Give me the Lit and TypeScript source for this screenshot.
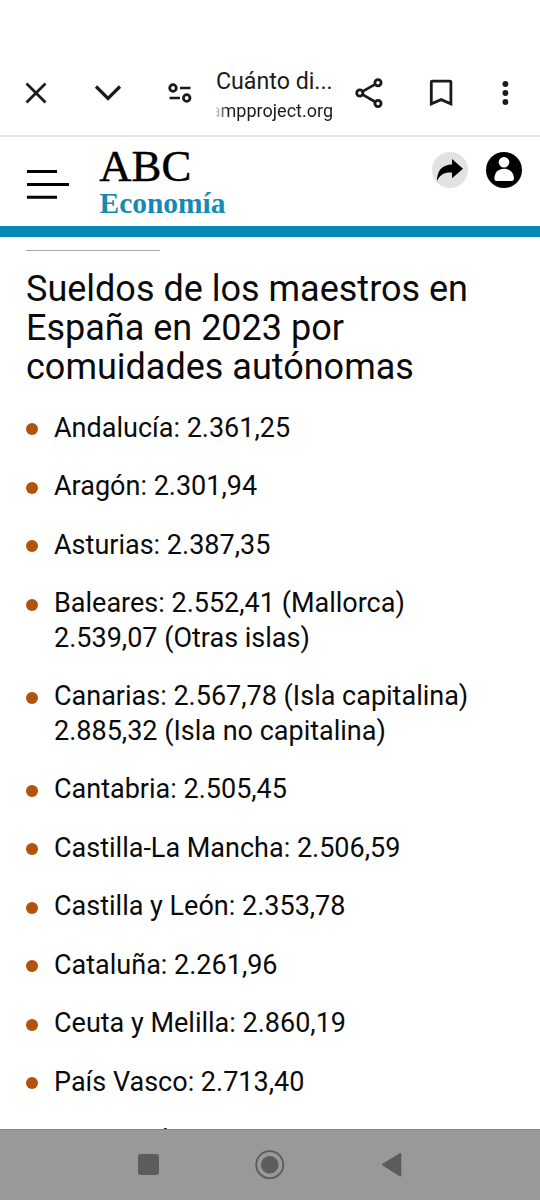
import { LitElement, html, css } from "lit";
import { customElement } from "lit/decorators.js";

const SALARIES: string[][] = [
  ["Andalucía: 2.361,25"],
  ["Aragón: 2.301,94"],
  ["Asturias: 2.387,35"],
  ["Baleares: 2.552,41 (Mallorca)", "2.539,07 (Otras islas)"],
  ["Canarias: 2.567,78 (Isla capitalina)", "2.885,32 (Isla no capitalina)"],
  ["Cantabria: 2.505,45"],
  ["Castilla-La Mancha: 2.506,59"],
  ["Castilla y León: 2.353,78"],
  ["Cataluña: 2.261,96"],
  ["Ceuta y Melilla: 2.860,19"],
  ["País Vasco: 2.713,40"],
  ["Extremadura"],
];

@customElement("browser-bar")
class BrowserBar extends LitElement {
  static styles = css`
    :host { display: block; flex: none; }
    .bar {
      box-sizing: border-box; height: 137px; padding-top: 57px;
      border-bottom: 2px solid #e3e3e3; display: grid;
      grid-template-columns: 72px 72px 72px 117px 72px 72px 57px 6px;
      color: #1b1b1b;
    }
    .icon { width: 72px; height: 72px; display: block; fill: none; stroke: currentColor; stroke-width: 2.8; }
    .page { padding-top: 9px; font-family: Roboto, sans-serif; white-space: nowrap; }
    .title { font-size: 23.2px; line-height: 30px; }
    .host {
      font-size: 18px; line-height: 24px; margin-top: 3px;
      display: flex; justify-content: flex-end; overflow: hidden;
      -webkit-mask-image: linear-gradient(to right, rgba(0,0,0,.15), #000 11px);
      mask-image: linear-gradient(to right, rgba(0,0,0,.15), #000 11px);
    }
  `;
  render() {
    return html`
      <div class="bar">
        <svg class="icon" viewBox="0 0 72 72"><path d="M26.5 26.5 45.5 45.5M45.5 26.5 26.5 45.5" /></svg>
        <svg class="icon" viewBox="0 0 72 72"><path stroke-width="3.2" d="M24 29.5 36 41.5 48 29.5" /></svg>
        <svg class="icon" viewBox="0 0 72 72">
          <circle cx="29" cy="31" r="3.3" /><circle cx="42.7" cy="41" r="3.3" />
          <path stroke-width="2.3" d="M36 31H46.5M25.5 41H36" />
        </svg>
        <div class="page">
          <div class="title">Cuánto di...</div>
          <div class="host">ampproject.org</div>
        </div>
        <svg class="icon" viewBox="0 0 72 72">
          <circle cx="26.8" cy="36" r="3.1" /><circle cx="45" cy="25.7" r="3.1" /><circle cx="45" cy="46.5" r="3.1" />
          <path d="M29.7 34.4 42 27.4M29.7 37.6 42 44.8" />
        </svg>
        <svg class="icon" viewBox="0 0 72 72"><path d="M26.3 46.8V25.2Q26.3 24.2 27.3 24.2H44.9Q45.9 24.2 45.9 25.2V46.8L36.1 42.6Z" /></svg>
        <svg class="icon" viewBox="0 0 72 72">
          <g fill="currentColor" stroke="none"><circle cx="28.4" cy="27" r="2.9" /><circle cx="28.4" cy="36" r="2.9" /><circle cx="28.4" cy="45" r="2.9" /></g>
        </svg>
      </div>
    `;
  }
}

@customElement("site-header")
class SiteHeader extends LitElement {
  static styles = css`
    :host { display: block; flex: none; }
    .header {
      box-sizing: border-box; height: 100px; border-bottom: 11px solid #058ab4;
      display: grid; grid-template-columns: 99px 1fr auto; padding-right: 18px;
    }
    .menu { width: 42px; height: 32px; margin: 32px 0 0 27px; display: block; }
    .logo { width: 140px; height: 89px; display: block; }
    .actions { display: flex; gap: 18px; padding-top: 14.5px; }
    .round { width: 36px; height: 36px; display: block; }
  `;
  render() {
    return html`
      <div class="header">
        <svg class="menu" viewBox="0 0 42 32"><path stroke="#000" stroke-width="3" d="M0 2.5H30M0 15.5H42M0 28.2H30" /></svg>
        <svg class="logo" viewBox="0 0 140 89">
          <text x="0.3" y="44" textLength="92" lengthAdjust="spacingAndGlyphs" font-family="Liberation Serif, serif" font-size="43.8" fill="#000" stroke="#000" stroke-width=".5">ABC</text>
          <text x="0.5" y="76" textLength="126" lengthAdjust="spacingAndGlyphs" font-family="Liberation Serif, serif" font-weight="700" font-size="28.8" fill="#168ab2">Economía</text>
        </svg>
        <div class="actions">
          <svg class="round" viewBox="0 0 36 36">
            <circle cx="18" cy="18" r="18" fill="#e2e2e2" />
            <path d="M5 29C5 18 10.5 12.6 20 12.4V7L31 16.7 20 26.3V20.5C12 20.2 8.2 22.5 5 29Z" />
          </svg>
          <svg class="round" viewBox="0 0 36 36">
            <circle cx="18" cy="18" r="18" />
            <circle cx="18" cy="10.2" r="5.3" fill="#fff" />
            <path fill="#fff" d="M8.4 26.5C8.4 20.5 12.5 16.8 18 16.8S27.9 20.5 27.9 26.5Q27.9 29 25.4 29H10.9Q8.4 29 8.4 26.5Z" />
          </svg>
        </div>
      </div>
    `;
  }
}

@customElement("salary-article")
class SalaryArticle extends LitElement {
  static styles = css`
    :host { display: block; flex: 1; min-height: 0; overflow: hidden; }
    .article { padding: 13px 20px 0 26px; font-family: Roboto, sans-serif; color: #0b0b0b; }
    .rule { width: 134px; height: 1px; background: #aaa; }
    .heading { margin: 19px 0 0; font-weight: 400; font-size: 36px; line-height: 39px; white-space: nowrap; }
    .list { list-style: none; margin: 23.5px 0 0; padding: 0; display: flex; flex-direction: column; gap: 24px; }
    .item { display: grid; grid-template-columns: 28px 1fr; font-size: 27px; line-height: 34.5px; white-space: nowrap; }
    .dot { width: 12px; height: 12px; border-radius: 50%; background: #b35309; margin-top: 12.6px; margin-left: -0.5px; }
  `;
  render() {
    return html`
      <div class="article">
        <div class="rule"></div>
        <h2 class="heading">Sueldos de los maestros en<br />España en 2023 por<br />comuidades autónomas</h2>
        <ul class="list">
          ${SALARIES.map((lines) => html`
            <li class="item"><span class="dot"></span><div>${lines.map((l) => html`<div>${l}</div>`)}</div></li>
          `)}
        </ul>
      </div>
    `;
  }
}

@customElement("system-nav")
class SystemNav extends LitElement {
  static styles = css`
    :host { display: block; flex: none; }
    .nav { box-sizing: border-box; height: 71px; background: #999; border-top: 1px solid #858585; display: flex; justify-content: center; align-items: flex-start; }
    .key { width: 121.5px; height: 70px; display: block; }
  `;
  render() {
    return html`
      <div class="nav">
        <svg class="key" viewBox="0 0 121.5 70"><rect x="50" y="24" width="21" height="21" rx="3" fill="#5c5c5c" /></svg>
        <svg class="key" viewBox="0 0 121.5 70">
          <circle cx="60.75" cy="34.7" r="13.5" fill="none" stroke="#5c5c5c" stroke-width="1.8" /><circle cx="60.75" cy="34.7" r="8.8" fill="#5c5c5c" />
        </svg>
        <svg class="key" viewBox="0 0 121.5 70"><path d="M52 34.7 69.3 24V45.5Z" fill="#5c5c5c" stroke="#5c5c5c" stroke-width="2" stroke-linejoin="round" /></svg>
      </div>
    `;
  }
}

@customElement("app-root")
class AppRoot extends LitElement {
  static styles = css`
    :host { display: block; }
    .screen { width: 540px; height: 1200px; display: flex; flex-direction: column; background: #fff; overflow: hidden; }
  `;
  render() {
    return html`
      <div class="screen">
        <browser-bar></browser-bar>
        <site-header></site-header>
        <salary-article></salary-article>
        <system-nav></system-nav>
      </div>
    `;
  }
}
